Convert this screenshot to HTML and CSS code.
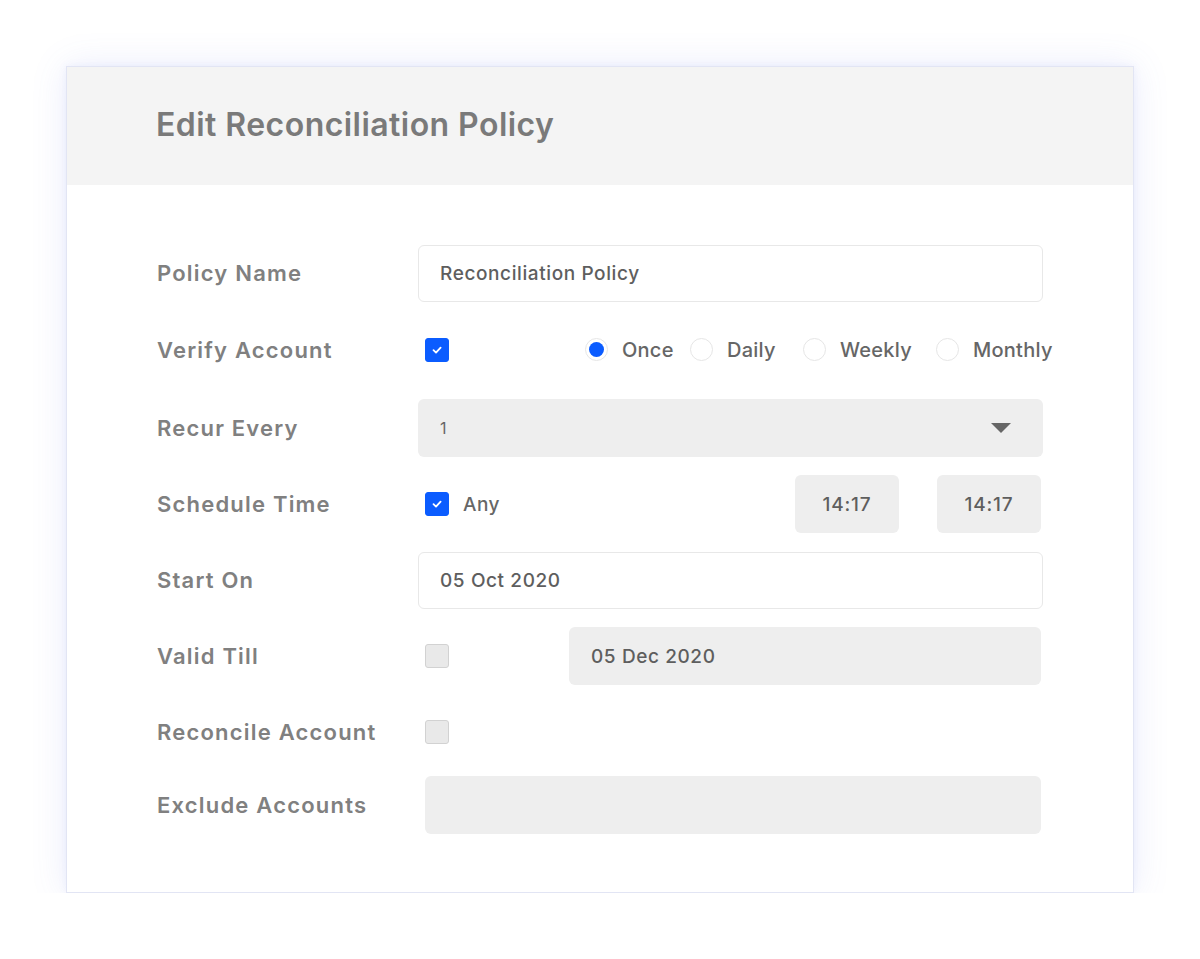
FILE: index.html
```html
<!DOCTYPE html>
<html lang="en">
<head>
    <meta charset="UTF-8">
    <meta name="viewport" content="width=device-width, initial-scale=1.0">
    <title>Edit Reconciliation Policy</title>
    <link rel="stylesheet" href="styles.css">
</head>
<body>
    <div class="card">
        <div class="card-header">
            <h1>Edit Reconciliation Policy</h1>
        </div>
        <form class="policy-form">
            <label class="field-label">Policy Name</label>
            <div class="field">
                <div class="text-input wide">Reconciliation Policy</div>
            </div>

            <label class="field-label row-verify">Verify Account</label>
            <div class="field row-verify">
                <span class="checkbox checked">
                    <svg viewBox="0 0 12 12" width="12" height="12"><path d="M2.5 6.2 L5 8.6 L9.6 3.6" fill="none" stroke="#fff" stroke-width="1.8" stroke-linecap="round" stroke-linejoin="round"/></svg>
                </span>
                <div class="radio-group">
                    <div class="radio-option once"><span class="radio selected"></span><span class="radio-label">Once</span></div>
                    <div class="radio-option daily"><span class="radio"></span><span class="radio-label">Daily</span></div>
                    <div class="radio-option weekly"><span class="radio"></span><span class="radio-label">Weekly</span></div>
                    <div class="radio-option"><span class="radio"></span><span class="radio-label">Monthly</span></div>
                </div>
            </div>

            <label class="field-label">Recur Every</label>
            <div class="field">
                <div class="select wide">
                    <span>1</span>
                    <svg class="caret" viewBox="0 0 20 10" width="20" height="10"><path d="M0 0 H20 L10 10 Z" fill="#666"/></svg>
                </div>
            </div>

            <label class="field-label">Schedule Time</label>
            <div class="field schedule">
                <span class="checkbox checked">
                    <svg viewBox="0 0 12 12" width="12" height="12"><path d="M2.5 6.2 L5 8.6 L9.6 3.6" fill="none" stroke="#fff" stroke-width="1.8" stroke-linecap="round" stroke-linejoin="round"/></svg>
                </span>
                <span class="check-label">Any</span>
                <div class="time-box first">14:17</div>
                <div class="time-box">14:17</div>
            </div>

            <label class="field-label">Start On</label>
            <div class="field">
                <div class="text-input wide">05 Oct 2020</div>
            </div>

            <label class="field-label">Valid Till</label>
            <div class="field valid">
                <span class="checkbox"></span>
                <div class="filled-input date">05 Dec 2020</div>
            </div>

            <label class="field-label row-reconcile">Reconcile Account</label>
            <div class="field row-reconcile">
                <span class="checkbox"></span>
            </div>

            <label class="field-label">Exclude Accounts</label>
            <div class="field">
                <div class="filled-input exclude"></div>
            </div>
        </form>
    </div>
</body>
</html>
```

FILE: styles.css
```css
body {
    margin: 0;
    background: #fff;
    font-family: Inter, "Noto Sans", sans-serif;
}
.card {
    margin: 66px 0 0 66px;
    width: 1066px;
    border: 1px solid #e2e5f4;
    background: #fff;
    box-shadow: 0 0 34px rgba(90, 110, 230, 0.13), 0 0 8px rgba(90, 110, 230, 0.08);
}
.card-header {
    box-sizing: border-box;
    height: 118px;
    background: #f4f4f4;
    display: flex;
    align-items: center;
    padding: 0 0 4px 89px;
}
.card-header h1 {
    margin: 0;
    font-size: 32px;
    font-weight: 600;
    color: #7a7a7a;
    letter-spacing: 0.45px;
}
.policy-form {
    display: grid;
    grid-template-columns: 261px 625px;
    grid-template-rows: 58px 61px 58px 58px 58px 58px 55px 58px;
    row-gap: 18px;
    padding: 59px 90px 58px 90px;
}
.row-verify {
    padding-bottom: 2px;
}
.row-reconcile {
    padding-top: 3px;
}
.field-label {
    display: flex;
    align-items: center;
    font-size: 22px;
    font-weight: 600;
    color: #808080;
    letter-spacing: 1.2px;
}
.field {
    display: flex;
    align-items: center;
}
.text-input {
    box-sizing: border-box;
    height: 57px;
    border: 1px solid #e8e8e8;
    border-radius: 6px;
    background: #fff;
    display: flex;
    align-items: center;
    padding-left: 21px;
    font-size: 19px;
    font-weight: 500;
    color: #5e5e5e;
    letter-spacing: 0.6px;
}
.wide {
    width: 625px;
}
.select {
    box-sizing: border-box;
    height: 58px;
    background: #eeeeee;
    border-radius: 6px;
    display: flex;
    align-items: center;
    justify-content: space-between;
    padding: 0 32px 0 22px;
    font-size: 16px;
    color: #666;
}
.caret {
    display: block;
}
.checkbox {
    box-sizing: border-box;
    width: 24px;
    height: 24px;
    margin-left: 7px;
    border-radius: 3px;
    border: 1px solid #d2d2d2;
    background: #e9e9e9;
    display: inline-flex;
    align-items: center;
    justify-content: center;
    flex-shrink: 0;
}
.checkbox.checked {
    background: #0b5cff;
    border-color: #0b5cff;
}
.radio-group {
    display: flex;
    align-items: center;
    margin-left: 136px;
}
.radio-option {
    display: flex;
    align-items: center;
}
.radio-option.once {
    width: 105px;
}
.radio-option.daily {
    width: 113px;
}
.radio-option.weekly {
    width: 133px;
}
.radio {
    box-sizing: border-box;
    width: 23px;
    height: 23px;
    border-radius: 50%;
    border: 1px solid #e6e6e6;
    background: #fff;
    display: inline-flex;
    align-items: center;
    justify-content: center;
    flex-shrink: 0;
}
.radio.selected::after {
    content: "";
    width: 15px;
    height: 15px;
    border-radius: 50%;
    background: #0b5cff;
}
.radio-label {
    font-size: 20px;
    font-weight: 500;
    color: #666;
    margin-left: 14px;
    letter-spacing: 0.25px;
}
.check-label {
    font-size: 19px;
    font-weight: 500;
    color: #666;
    margin-left: 14px;
    letter-spacing: 0.5px;
}
.time-box {
    box-sizing: border-box;
    width: 104px;
    height: 58px;
    background: #eeeeee;
    border-radius: 6px;
    display: flex;
    align-items: center;
    justify-content: center;
    font-size: 19px;
    font-weight: 500;
    color: #5e5e5e;
    letter-spacing: 0.8px;
}
.time-box.first {
    margin-left: auto;
    margin-right: 38px;
}
.schedule {
    padding-right: 2px;
}
.filled-input {
    box-sizing: border-box;
    height: 58px;
    background: #eeeeee;
    border-radius: 6px;
    display: flex;
    align-items: center;
    padding-left: 22px;
    font-size: 19px;
    font-weight: 500;
    color: #5e5e5e;
    letter-spacing: 0.6px;
}
.filled-input.date {
    width: 472px;
    margin-left: auto;
    margin-right: 2px;
}
.filled-input.exclude {
    width: 616px;
    margin-left: 7px;
}
```
